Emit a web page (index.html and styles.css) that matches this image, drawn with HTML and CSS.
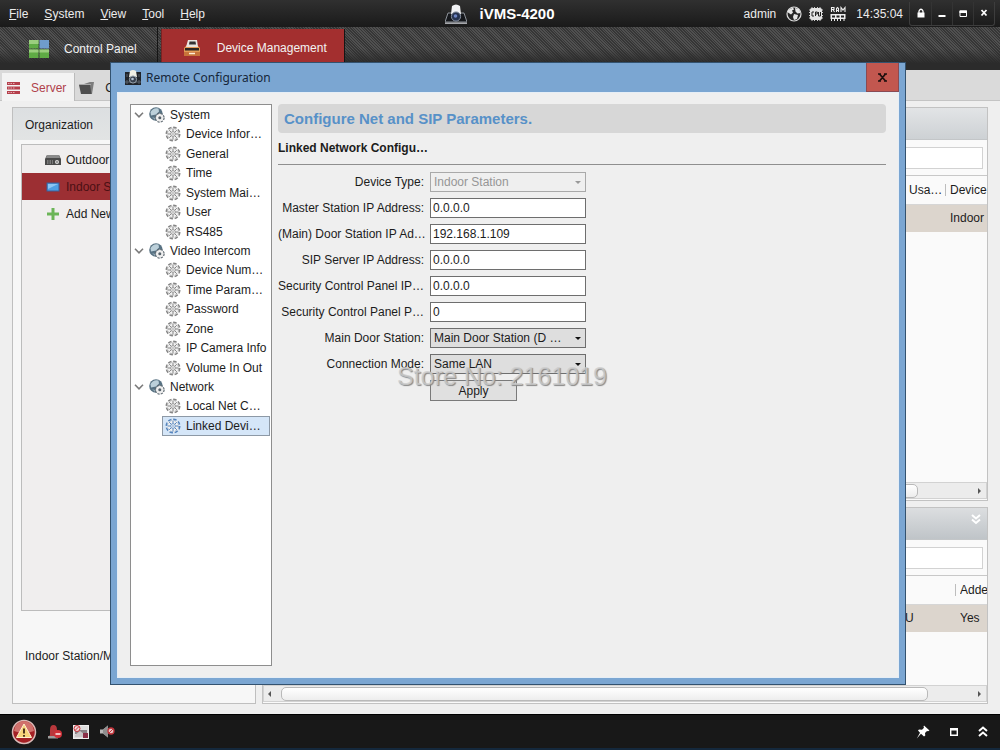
FILE: index.html
```html
<!DOCTYPE html>
<html lang="en">
<head>
<meta charset="utf-8">
<title>iVMS-4200</title>
<link rel="stylesheet" href="styles.css">
</head>
<body>
<svg class="defs" aria-hidden="true">
  <symbol id="camera" viewBox="0 0 22 20">
    <path d="M3 9h16l3 9H0z" fill="#15171b" stroke="#8d9299" stroke-width="1"/>
    <path d="M0 19.2h22" stroke="#c8cbd0" stroke-width="1.2"/>
    <path d="M7 2q4-3 8 0l1 8q-5 3-10 0z" fill="#f1f2f4"/>
    <circle cx="11" cy="12.5" r="4.600" fill="#26334f" stroke="#8790a0" stroke-width="1"/>
    <circle cx="10.5" cy="12" r="1.800" fill="#6d85c4"/>
  </symbol>
  <symbol id="camera-box" viewBox="0 0 16 15">
    <path d="M0 2h16v13H0z" fill="#20242a"/>
    <path d="M2 4v3M14 4v3M2 10v4M14 10v4M0 12h16" stroke="#59616b" stroke-width="1"/>
    <path d="M5 1q3-2 6 0l1 6H4z" fill="#f0efe6"/>
    <circle cx="8" cy="9.500" r="3.600" fill="#39424f" stroke="#9aa5b0"/>
    <circle cx="7.500" cy="9" r="1.300" fill="#b8c6d8"/>
  </symbol>
  <symbol id="gear" viewBox="0 0 16 16">
    <circle cx="8" cy="8" r="6.700" fill="#ededed" stroke="currentColor" stroke-width="1.600" stroke-dasharray="3.500 1.760"/>
    <circle cx="8" cy="8" r="6" fill="#f2f2f2"/>
    <path d="M8 5.500V2.500M8 10.500v3M5.500 8H2.500M10.500 8h3M6.300 6.300L4.200 4.200M9.700 6.300l2.100-2.100M6.300 9.700l-2.100 2.100M9.700 9.700l2.100 2.100" stroke="currentColor" stroke-width="1"/>
    <circle cx="8" cy="8" r="5.600" fill="none" stroke="currentColor" stroke-width=".6" stroke-dasharray="2.400 2"/>
    <circle cx="8" cy="8" r="2.300" fill="#fff" stroke="currentColor" stroke-width=".9"/>
    <circle cx="8" cy="8" r=".8" fill="currentColor"/>
  </symbol>
  <symbol id="globe-gear" viewBox="0 0 16 16">
    <circle cx="7" cy="7" r="6.800" fill="#587283"/>
    <path d="M1.500 5q3-5 8-3.500l.5 3-3 3-5 1z" fill="#bcd0da"/>
    <path d="M3 10l3 1v2z" fill="#93aab6"/>
    <circle cx="10.800" cy="10.800" r="4.200" fill="#f5f5f5" stroke="#5c676f" stroke-width="1.400" stroke-dasharray="2.200 1.100"/>
    <circle cx="10.800" cy="10.800" r="3.600" fill="#eee"/>
    <circle cx="10.800" cy="10.800" r="1.500" fill="#56626b"/>
  </symbol>
  <symbol id="chevron" viewBox="0 0 10 6"><path d="M1 .8l4 4 4-4" fill="none" stroke="#7b7b7b" stroke-width="1.600"/></symbol>
</svg>

<header class="menubar">
  <nav class="menus">
    <button><u>F</u>ile</button><button><u>S</u>ystem</button><button><u>V</u>iew</button><button><u>T</u>ool</button><button><u>H</u>elp</button>
  </nav>
  <div class="brand">
    <svg width="22" height="20"><use href="#camera"/></svg>
    <span>iVMS-4200</span>
  </div>
  <div class="status">
    <span class="user">admin</span>
    <svg width="16" height="16" viewBox="0 0 16 16"><circle cx="8" cy="8" r="7" fill="#262626" stroke="#ddd" stroke-width="1.200"/><path d="M2 4l5-2.500 1 2-2 1 1 2-2 2-3-2zM9 2l4 1 1.500 4-3 .5-2-2zM8 8l4 1-1 4-3 1-1-3z" fill="#e6e6e6"/></svg>
    <svg width="16" height="16" viewBox="0 0 16 16"><path d="M1 4h14M1 6.500h14M1 9.500h14M1 12h14M4 1v14M6.500 1v14M9.500 1v14M12 1v14" stroke="#ccc"/><rect x="2" y="2" width="12" height="12" rx="2" fill="#e4e4e4"/><path d="M6 6H4v4h2M7.500 10V6h1.800v2H7.500M10.500 6v4h2V6" fill="none" stroke="#222"/></svg>
    <svg width="16" height="16" viewBox="0 0 16 16"><path d="M1.500 6V1.500H4V3.500H1.500M3 3.500L4.500 6M6.500 6V2.500L7.500 1.500l1 1V6M6.500 4.500h2M11 6V1.500l2 2.500 2-2.500V6" fill="none" stroke="#eee" stroke-width="1.100"/><path d="M.5 8h15v5H.5z" fill="#eee"/><path d="M2 9.500h3v2H2zM6.500 9.500h3v2h-3zM11 9.500h3v2h-3z" fill="#222"/><path d="M1.500 12v3M4.500 12v3M7.500 12v3M10.500 12v3M14 12v3" stroke="#eee"/></svg>
    <time>14:35:04</time>
    <div class="winbuttons">
      <button aria-label="Lock"><svg width="10" height="10" viewBox="0 0 10 10"><path d="M3 5V3q2-3.500 4 0v2" fill="none" stroke="#fff" stroke-width="1.300"/><path d="M1.500 4.500h7V9.500h-7z" fill="#fff"/></svg></button>
      <button aria-label="Minimize"><svg width="10" height="10" viewBox="0 0 10 10"><path d="M1.500 7h7v2h-7z" fill="#fff"/></svg></button>
      <button aria-label="Maximize"><svg width="10" height="10" viewBox="0 0 10 10"><path d="M2 3h6.500v5.500H2z" fill="none" stroke="#fff"/><path d="M1.500 2.500h7.500v2.500H1.500z" fill="#fff"/></svg></button>
      <button aria-label="Close"><svg width="10" height="10" viewBox="0 0 10 10"><path d="M2.500 2l5 5.500M7.500 2l-5 5.500" stroke="#fff" stroke-width="1.800"/></svg></button>
    </div>
  </div>
</header>

<nav class="ribbon">
  <button class="module">
    <svg width="20" height="18" viewBox="0 0 20 18"><path d="M0 0h9.500v8.500H0zM0 9.500h9.500V18H0zM10.500 9.500H20V18h-9.500z" fill="#5fab45"/><path d="M10.500 0H20v8.500h-9.500z" fill="#6f9ccb"/><path d="M0 0h9.500v4H0zM0 9.500h9.500v3H0zM10.500 9.500H20v3h-9.500z" fill="#9bce7f"/></svg>
    Control Panel
  </button>
  <button class="module active">
    <svg width="18" height="17" viewBox="0 0 18 17"><path d="M1 8l3-3h10l3 3v8H1z" fill="#e39a55"/><path d="M1 12h16v4H1z" fill="#c8733a"/><path d="M5 0h9l1 7H3z" fill="#e9e6e0"/><path d="M6.500 1.500h6l.5 3H6z" fill="#333"/><path d="M2 8h14v2.500H2z" fill="#2c2623"/><path d="M6 13.500h6" stroke="#fff0d8" stroke-width="1.500"/></svg>
    Device Management
  </button>
</nav>

<nav class="tabs">
  <button class="tab current">
    <svg width="13" height="12" viewBox="0 0 13 12"><path d="M0 0h13v3H0zM0 4.500h13v3H0zM0 9h13v3H0z" fill="#b5404c"/><path d="M1 1.500h7M1 6h7M1 10.500h7" stroke="#f0c4c8" stroke-width=".8" stroke-dasharray="1.500 1"/></svg>
    Server
  </button>
  <button class="tab">
    <svg width="15" height="12" viewBox="0 0 15 12"><path d="M5 2l6-2h4l-2 12H5z" fill="#7d7d7d"/><path d="M0 3h11l1.500 9H2z" fill="#4e4e4e"/><path d="M0 2.500h12" stroke="#a9a9a9"/></svg>
    Group
  </button>
</nav>

<main class="work">
  <section class="organization">
    <h2 class="panelhead">Organization</h2>
    <ul class="types">
      <li><svg width="16" height="12" viewBox="0 0 16 12"><path d="M2 1h12l2 4v6H0V5z" fill="#4a4a4a"/><path d="M2 1h12l1 3H1z" fill="#8b8b8b"/><circle cx="12" cy="8" r="2" fill="#ddd"/><circle cx="12" cy="8" r=".8" fill="#444"/><path d="M2 7h6M2 9h6" stroke="#aaa" stroke-dasharray="1.500 1"/></svg>Outdoor Device</li>
      <li class="picked"><svg width="16" height="12" viewBox="0 0 16 12"><rect x="2" y="2" width="12" height="8" fill="#4fa0e4" stroke="#3a5f98"/><path d="M3 3h10L3 8z" fill="#8cc6f4"/></svg>Indoor Station</li>
      <li><svg width="16" height="12" viewBox="0 0 16 12"><path d="M6.500 0h3v4.500H14v3H9.500V12h-3V7.500H2v-3h4.500z" fill="#6cb558"/></svg>Add New Type</li>
    </ul>
    <p class="note">Indoor Station/Master</p>
  </section>

  <div class="devices">
    <section class="panel grow">
      <h2 class="panelhead"></h2>
      <div class="search"><input type="text" aria-label="Filter devices"></div>
      <table>
        <tr><th></th><th class="usage">Usa…</th><th class="kind">Device</th></tr>
        <tr><td></td><td></td><td>Indoor</td></tr>
      </table>
      <div class="hscroll upper"><i class="thumb"></i><i class="next"></i></div>
    </section>
    <section class="panel">
      <h2 class="panelhead fold"><svg width="10" height="11" viewBox="0 0 10 11"><path d="M1 1l4 3.500L9 1M1 5.500L5 9l4-3.500" fill="none" stroke="#fff" stroke-width="2"/></svg></h2>
      <div class="search"><input type="text" aria-label="Filter online devices"></div>
      <table>
        <tr><th></th><th class="serial"></th><th class="added">Adde</th></tr>
        <tr><td></td><td>U</td><td>Yes</td></tr>
      </table>
      <div class="hscroll lower"><i class="prev"></i><i class="thumb"></i><i class="next"></i></div>
    </section>
  </div>
</main>

<footer class="taskbar">
  <div class="alerts">
    <svg width="26" height="26" viewBox="0 0 26 26"><circle cx="13" cy="13" r="11.500" fill="#a31f24" stroke="#d9b9b6" stroke-width="1.500"/><path d="M3 12a10 10 0 0 1 20 0q-10 4-20 0z" fill="#d0716c"/><path d="M13 5l7.500 13.500h-15z" fill="#f6d37a" stroke="#fff1cf" stroke-linejoin="round"/><path d="M13 9.500v5M13 16v1.800" stroke="#3c2413" stroke-width="1.800"/></svg>
    <svg width="16" height="14" viewBox="0 0 16 14"><path d="M3 10V5q0-5 3.500-5T10 5l2 5v1H2z" fill="#b8383c"/><path d="M1 11h10v2.500H1z" fill="#9d9d9d"/><circle cx="11" cy="9" r="4" fill="#cf3038"/><path d="M8.500 8h5v2h-5z" fill="#f2c0c0"/></svg>
    <svg width="16" height="14" viewBox="0 0 16 14"><rect x=".5" y=".5" width="15" height="13" fill="#ddd" stroke="#eee"/><path d="M2 5h12v4H2z" fill="#8a8287"/><path d="M2 10l5-4 4 3-1 3H2z" fill="#c9c4c6"/><path d="M10 8h5v5h-5z" fill="#8b2f48"/><circle cx="4" cy="3.500" r="3" fill="#f0dada" stroke="#c8323a"/><path d="M2 5.500l4-4" stroke="#c8323a"/></svg>
    <svg width="16" height="14" viewBox="0 0 16 14"><path d="M1 4.500h3l5-4v12l-5-4H1z" fill="#b9b9b9"/><path d="M4 4.500l5-4v12l-5-4z" fill="#8f8f8f"/><circle cx="12" cy="6" r="3" fill="#e9c6c6" stroke="#c2353c" stroke-width="1.300"/><path d="M10 8l4-4" stroke="#c2353c"/></svg>
  </div>
  <div class="tools">
    <button aria-label="Pin"><svg width="14" height="14" viewBox="0 0 14 14"><path d="M8 .5l5.500 5-1.500.8-1-.3-2 2 .3 2.500-1.300 1L5 8.700.8 13.500 4 7.700 2 5.500l1-1 3 .2 2-2-.5-1z" fill="#fff"/></svg></button>
    <button aria-label="Restore"><svg width="8" height="8" viewBox="0 0 8 8"><path d="M.7.7h6.600v6.600H.7z" fill="none" stroke="#fff" stroke-width="1.400"/><path d="M0 0h8v2.500H0z" fill="#fff"/></svg></button>
    <button aria-label="Expand"><svg width="10" height="11" viewBox="0 0 10 11"><path d="M1 5l4-3.500L9 5M1 10l4-3.500L9 10" fill="none" stroke="#fff" stroke-width="2"/></svg></button>
  </div>
</footer>

<div class="dialog" role="dialog" aria-labelledby="dialog-title">
  <div class="titlebar">
    <svg width="16" height="15"><use href="#camera-box"/></svg>
    <h1 id="dialog-title">Remote Configuration</h1>
    <button class="close" aria-label="Close dialog"><svg width="9" height="9" viewBox="0 0 9 9"><path d="M1.500 1l6 7M7.500 1l-6 7M0 1h3M6 1h3M0 8h3M6 8h3" stroke="#1c0f0e" stroke-width="1.700"/></svg></button>
  </div>
  <div class="content">
    <nav class="tree">
      <h3><svg class="arrow"><use href="#chevron"/></svg><svg class="icon"><use href="#globe-gear"/></svg>System</h3>
      <ul>
        <li><svg class="icon"><use href="#gear"/></svg>Device Infor…</li>
        <li><svg class="icon"><use href="#gear"/></svg>General</li>
        <li><svg class="icon"><use href="#gear"/></svg>Time</li>
        <li><svg class="icon"><use href="#gear"/></svg>System Mai…</li>
        <li><svg class="icon"><use href="#gear"/></svg>User</li>
        <li><svg class="icon"><use href="#gear"/></svg>RS485</li>
      </ul>
      <h3><svg class="arrow"><use href="#chevron"/></svg><svg class="icon"><use href="#globe-gear"/></svg>Video Intercom</h3>
      <ul>
        <li><svg class="icon"><use href="#gear"/></svg>Device Num…</li>
        <li><svg class="icon"><use href="#gear"/></svg>Time Param…</li>
        <li><svg class="icon"><use href="#gear"/></svg>Password</li>
        <li><svg class="icon"><use href="#gear"/></svg>Zone</li>
        <li><svg class="icon"><use href="#gear"/></svg>IP Camera Info</li>
        <li><svg class="icon"><use href="#gear"/></svg>Volume In Out</li>
      </ul>
      <h3><svg class="arrow"><use href="#chevron"/></svg><svg class="icon"><use href="#globe-gear"/></svg>Network</h3>
      <ul>
        <li><svg class="icon"><use href="#gear"/></svg>Local Net C…</li>
        <li class="selected"><svg class="icon"><use href="#gear"/></svg>Linked Devi…</li>
      </ul>
    </nav>
    <form class="settings" onsubmit="return false">
      <h2>Configure Net and SIP Parameters.</h2>
      <h3>Linked Network Configu…</h3>
      <div class="fields">
        <label for="type">Device Type:</label>
        <span class="pick off"><select id="type" disabled><option>Indoor Station</option></select></span>
        <label for="master">Master Station IP Address:</label>
        <input id="master" type="text" value="0.0.0.0">
        <label for="door">(Main) Door Station IP Ad…</label>
        <input id="door" type="text" value="192.168.1.109">
        <label for="sip">SIP Server IP Address:</label>
        <input id="sip" type="text" value="0.0.0.0">
        <label for="panel-ip">Security Control Panel IP…</label>
        <input id="panel-ip" type="text" value="0.0.0.0">
        <label for="panel-port">Security Control Panel P…</label>
        <input id="panel-port" type="text" value="0">
        <label for="station">Main Door Station:</label>
        <span class="pick"><select id="station"><option>Main Door Station (D …</option></select></span>
        <label for="mode">Connection Mode:</label>
        <span class="pick"><select id="mode"><option>Same LAN</option></select></span>
        <button class="apply">Apply</button>
      </div>
    </form>
  </div>
</div>
<div class="watermark">Store No: 2161019</div>
</body>
</html>
```
FILE: styles.css
```css
* { box-sizing: border-box; }

body {
  margin: 0;
  height: 100vh;
  display: flex;
  flex-direction: column;
  position: relative;
  overflow: hidden;
  background: #efefef;
  color: #1c1c1c;
  font: 12px/16px "Liberation Sans", Arial, sans-serif;
}

button, input, select { font: inherit; color: inherit; }
button { border: 0; padding: 0; background: none; }
h1, h2, h3, p, ul { margin: 0; padding: 0; font-weight: normal; font-size: 12px; }
ul { list-style: none; }
svg { flex: none; display: block; }
.defs { position: absolute; width: 0; height: 0; }

/* Menu bar */
.menubar {
  flex: none;
  height: 27px;
  display: grid;
  grid-template-columns: 1fr auto 1fr;
  align-items: center;
  background: linear-gradient(#303030, #1a1a1a);
  color: #ececec;
}
.menus { display: flex; gap: 16px; padding-left: 9px; }
.brand { display: flex; align-items: center; gap: 12px; font-size: 15px; font-weight: bold; color: #fff; }
.status { display: flex; align-items: center; justify-content: flex-end; gap: 6px; padding-right: 5px; }
.user { margin-right: 4px; }
.status time { margin-left: 4px; }
.winbuttons { display: flex; border: 1px solid #3d3d3d; border-top: 0; border-radius: 0 0 3px 3px; height: 24px; }
.winbuttons button { width: 21px; display: grid; place-items: center; }
.winbuttons button + button { border-left: 1px solid #343434; }

/* Module ribbon */
.ribbon {
  flex: none;
  height: 43px;
  display: flex;
  gap: 3px;
  background:
    linear-gradient(rgba(43, 43, 43, 0) 50%, #2b2b2b 85%),
    repeating-linear-gradient(45deg, #505050 0 1px, #363636 1px 2px);
}
.module { display: flex; align-items: center; color: #f2f2f2; border-right: 1px solid #151515; }
.module:first-child { padding: 0 20px 0 29px; gap: 15px; }
.module.active { margin-top: 2px; padding: 0 17px 3px 21px; gap: 16px; background: #a32f2f; border-left: 1px solid #7c2222; }

/* Page tabs */
.tabs { flex: none; height: 31px; display: flex; background: #dadada; border-bottom: 1px solid #c4c4c4; padding-left: 2px; }
.tab { display: flex; align-items: center; gap: 11px; padding: 5px 4px 0; border-right: 1px solid #bbb; }
.tab.current { height: 28px; margin-top: 3px; padding: 2px 8px 0 5px; background: #f3f3f3; color: #b0414b; }

/* Work area behind the dialog */
.work { flex: 1; min-height: 0; display: flex; gap: 6px; padding: 6px 12px 10px; }
.panelhead { height: 32px; background: linear-gradient(#e2e4e6, #cdd1d4); border-bottom: 1px solid #c3c6c8; }
.organization { width: 244px; display: flex; flex-direction: column; border: 1px solid #bfbfbf; background: #f7f7f7; }
.organization .panelhead { padding: 9px 12px; background: linear-gradient(#dcdfe1, #e2e4e4); border: 0; }
.types { flex: 1; margin: 4px 8px 0; padding-top: 1px; border: 1px solid #bcbcbc; background: #f0eeee; }
.types li { height: 27px; display: flex; align-items: center; gap: 5px; padding-left: 23px; }
.types .picked { background: #9c2f33; color: #4a1013; }
.note { height: 92px; padding: 37px 12px; }

.devices { flex: 1; min-width: 0; display: flex; flex-direction: column; gap: 6px; }
.panel { display: flex; flex-direction: column; border: 1px solid #c2c2c2; background: #fafafa; }
.panel.grow { flex: 1; }
.panel:last-child { height: 197px; flex: none; }
.fold { display: flex; justify-content: flex-end; padding: 6px 6px; background: linear-gradient(#dcdee0, #bfc4c8); }
.search { padding: 7px 4px 6px; border-bottom: 1px solid #c8c8c8; }
.search input { display: block; width: 100%; height: 22px; border: 1px solid #d2d2d2; background: #fff; }
table { width: 100%; table-layout: fixed; border-collapse: collapse; }
th, td { height: 28px; padding: 0; font-weight: normal; text-align: left; white-space: nowrap; overflow: hidden; }
td { background: #dcd5cd; }
th { border-bottom: 1px solid #d6d6d6; }
.usage, .serial { background: linear-gradient(#bdbdbd, #bdbdbd) right 4px center / 1px 12px no-repeat; }
.usage { width: 41px; }
.kind { width: 37px; }
.serial { width: 55px; }
.added { width: 27px; }
.hscroll { margin-top: auto; margin-bottom: 1px; height: 17px; display: flex; align-items: center; background: #ececec; border: 1px solid #d2d2d2; }
.thumb { flex: 1; height: 14px; border: 1px solid #b9b9b9; border-radius: 5px; background: linear-gradient(#fff, #ededed); }
.prev, .next { border: 3px solid transparent; }
.prev { margin: 0 10px 0 4px; border-right-color: #555; border-left: 0; }
.next { border-left-color: #555; border-right: 0; margin: 0 5px 0 50px; }
.upper .next { margin-left: 60px; }

/* Task bar */
.taskbar {
  flex: none;
  height: 36px;
  display: flex;
  justify-content: space-between;
  align-items: center;
  padding: 0 12px 0 11px;
  background: #181818;
  border-top: 1px solid #000;
  border-bottom: 2px solid #14283c;
}
.alerts { display: flex; align-items: center; gap: 10px; }
.tools { display: flex; align-items: center; gap: 20px; }

/* Remote configuration dialog */
.dialog {
  position: absolute;
  inset: 62px 94px 65px 110px;
  display: flex;
  flex-direction: column;
  padding: 0 6px 6px;
  background: #7ba6d2;
  border: 1px solid #33526f;
}
.titlebar { flex: none; height: 29px; display: flex; align-items: center; gap: 5px; padding-left: 8px; }
.titlebar h1 { flex: 1; font-family: "Noto Sans", "Open Sans", sans-serif; color: #16263a; }
.close { align-self: stretch; width: 33px; display: grid; place-items: center; background: #c2574f; border: 1px solid #8a4a52; border-top: 0; }
.content { flex: 1; min-height: 0; display: flex; gap: 6px; padding: 11px 12px; background: #efefef; border: 1px solid #e6eef6; }

.tree { width: 142px; padding: 0 1px; background: #fff; border: 1px solid #8e8e8e; }
.tree h3, .tree li { display: flex; align-items: center; white-space: nowrap; }
.tree h3 { height: 19px; padding-left: 2px; gap: 5px; }
.tree ul { padding-left: 30px; }
.tree li { height: 20px; padding-left: 2px; gap: 5px; border: 1px solid transparent; }
.tree li:nth-child(even) { height: 19px; }
.tree ul:last-child li { height: 20px; }
.icon { width: 16px; height: 16px; color: #858585; }
.arrow { width: 10px; height: 6px; }
.tree .selected { background: #d5e6f8; border-color: #8d99a6; }
.selected .icon { color: #5484bd; }

.settings { flex: 1; min-width: 0; }
.settings h2 { height: 29px; padding: 0 6px; line-height: 29px; font-size: 15px; font-weight: bold; color: #5791c8; background: #d7d7d7; border-radius: 4px; }
.settings h3 { margin-bottom: 7px; padding: 7px 0 8px; font-weight: bold; border-bottom: 1px solid #8f8f8f; }
.fields { display: grid; grid-template-columns: 146px 156px; grid-auto-rows: 20px; gap: 6px; align-items: stretch; }
.fields label { text-align: right; line-height: 20px; white-space: nowrap; }
.fields input, .fields select { width: 100%; height: 20px; padding: 0 3px; border: 1px solid #6e6e6e; border-radius: 0; background: #fff; }
.fields input { padding: 0 2px; }
.fields select { appearance: none; background: #dedede; }
.pick { position: relative; }
.pick::after { content: ""; position: absolute; right: 5px; top: 9px; border: 3px solid transparent; border-top-color: #111; border-bottom: 0; }
.off::after { border-top-color: #999; }
.fields .off select { background: #efefef; color: #969696; border-color: #a9a9a9; opacity: 1; }
.apply { grid-column: 2; width: 87px; height: 21px; border: 1px solid #7a7a7a; background: #e0e0e0; }

.watermark {
  position: absolute;
  left: 397px;
  top: 361px;
  font-size: 25px;
  line-height: 30px;
  color: rgba(205, 205, 205, .8);
  text-shadow: 1px 1px 1px #888;
  pointer-events: none;
}
```
